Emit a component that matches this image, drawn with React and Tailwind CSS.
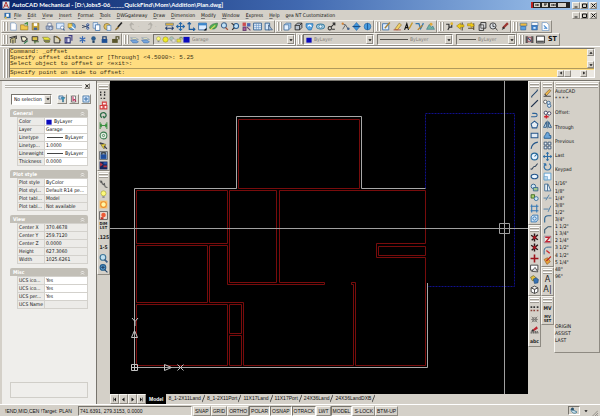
import clsx from 'clsx';

const RAISED = 'border border-t-[#f6f4ef] border-l-[#f6f4ef] border-r-[#8e8a82] border-b-[#8e8a82]';
const SUNKEN = 'border border-t-[#77746d] border-l-[#77746d] border-r-white border-b-white';

const MENUS = ['File', 'Edit', 'View', 'Insert', 'Format', 'Tools', 'DWGgateway', 'Draw', 'Dimension', 'Modify', 'Window', 'Express', 'Help', 'gea NT Customization'];

const page = <path d="M3 1.5h7l3 3v10H3z" fill="#fff" stroke="#5580b5" />;

const ICONS = {
  new: page,
  open: <><path d="M1 5h6l1 2h6v7H1z" fill="#f0c64c" stroke="#8a6d1c" /><path d="M8 4l5-3v5" fill="none" stroke="#3a8a3a" strokeWidth="2" /></>,
  save: <><path d="M2 2h12v12H2z" fill="#c8a63a" stroke="#8a6d1c" /><path d="M5 2h6v5H5z" fill="#fff" /><path d="M5 10h6v4H5z" fill="#3a5f9c" /></>,
  plot: <><path d="M2 7h12v6H2z" fill="#a8b7d0" stroke="#46587c" /><path d="M5 2h6v5H5z" fill="#fff" stroke="#46587c" /><circle cx="10" cy="11" r="3" fill="#c9d6ee" stroke="#46587c" /></>,
  preview: <><path d="M1 2h13v10H1z" fill="#dcecff" stroke="#4477b0" /><circle cx="11" cy="10" r="3" fill="#fff" stroke="#3b5d8e" /><path d="M13 12l2 3" stroke="#3b5d8e" strokeWidth="2" /></>,
  publish: <><circle cx="9" cy="8" r="6" fill="#6ea7d8" stroke="#2c5a8c" /><path d="M2 3h7v7H2z" fill="#f3d25c" stroke="#947619" /><path d="M8 8l6 5" stroke="#fff" strokeWidth="2" /></>,
  cut: <><path d="M2 6l12 4M2 10l12-4" stroke="#33415c" strokeWidth="1.5" /><circle cx="12" cy="5" r="2" fill="none" stroke="#27509c" strokeWidth="1.5" /><circle cx="12" cy="11" r="2" fill="none" stroke="#27509c" strokeWidth="1.5" /></>,
  copy: <><path d="M2 1h8v10H2z" fill="#e4f0ff" stroke="#3a6ea8" /><path d="M6 5h8v10H6z" fill="#fff" stroke="#3a6ea8" strokeWidth="1.5" /></>,
  paste: <><circle cx="7" cy="8" r="5.5" fill="#e4c15c" stroke="#6f5a20" /><path d="M7 6h7v9H7z" fill="#e4f0ff" stroke="#3a6ea8" /></>,
  brush: <><path d="M14 1L7 9" stroke="#222" strokeWidth="3" /><path d="M7 8l2 2-6 5-1-2z" fill="#8a6a2b" /></>,
  undo: <path d="M11 14c-6-1-7-5-5-11M3 6l3-4 4 3" fill="none" stroke="#b1aea7" strokeWidth="2" />,
  redo: <path d="M5 14c6-1 7-5 5-11M13 6l-3-4-4 3" fill="none" stroke="#b1aea7" strokeWidth="2" />,
  dist: <><path d="M1 2h14v4H1z" fill="#e4b437" stroke="#4a6a9a" /><path d="M1 11h14M4 8l-3 3 3 3M12 8l3 3-3 3" fill="none" stroke="#243f70" strokeWidth="1.8" /></>,
  pan: <path d="M8 1v14M1 8h14M5 4l3-3 3 3M5 12l3 3 3-3M4 5L1 8l3 3M12 5l3 3-3 3" fill="none" stroke="#2467a8" strokeWidth="1.8" />,
  ucs: <path d="M4 1v12h10M1 4l3-3 3 3M11 10l3 3-3 3" fill="none" stroke="#1c5ca0" strokeWidth="2" />,
  view: <><path d="M1 2h14v12H1z" fill="#dcecff" stroke="#39699e" strokeWidth="1.5" /><path d="M1 2h14v4H1z" fill="#3b86cc" /><path d="M10 15l5-5v5z" fill="#111" /></>,
  leaf: <><path d="M1 11C2 4 8 3 15 2c0 8-5 12-11 10z" fill="#53ad54" stroke="#236631" /><path d="M2 14l9-8" stroke="#e5e060" strokeWidth="2" /></>,
  zoom: <><circle cx="7" cy="6" r="4.5" fill="#bfe1f7" stroke="#41648c" strokeWidth="1.8" /><path d="M10 10l4 4" stroke="#a5533a" strokeWidth="2.5" /></>,
  zoomPrev: <><circle cx="9" cy="7" r="4.5" fill="#bfe1f7" stroke="#2b5f94" strokeWidth="1.8" /><path d="M6 10l-4 4M1 2l5 4" stroke="#333" strokeWidth="2.2" /></>,
  people: <><path d="M1 1h6v6H1z" fill="#cc4c50" /><path d="M9 2h6v6H9z" fill="#4c67b5" /><path d="M2 9h5v6H2zM9 9l6 6" fill="#ae5aa0" stroke="#6c4472" strokeWidth="2" /></>,
  palette: <><path d="M1 2h14v12H1z" fill="#e3eefa" stroke="#2b5b8e" strokeWidth="1.5" /><path d="M6 2v12M10 2v12M2 6h13M2 10h13" stroke="#5b8bc0" /></>,
  design: <><path d="M2 2h8v12H2z" fill="#d9e9fa" stroke="#2b5b8e" strokeWidth="1.5" /><path d="M8 5l7 9H8z" fill="#9bb8d8" stroke="#26466f" /></>,
  box: <><path d="M2 5l4-3h8v8l-4 4H2z" fill="#9cc3ea" stroke="#34608f" /><path d="M2 5h8v9H2z" fill="#e5f1ff" stroke="#34608f" /></>,
  boxDark: <><path d="M2 6l4-4h8v8l-4 4H2z" fill="#b9c3ce" stroke="#222" strokeWidth="1.5" /><path d="M2 6h8v8M10 6l4-4" fill="none" stroke="#222" strokeWidth="1.5" /></>,
  rotate3d: <><path d="M2 3h12v3l-3 8H6L2 9z" fill="#5ba6e4" stroke="#2877b7" strokeWidth="1.5" /><path d="M5 8c2-4 6-3 6 1" fill="none" stroke="#fff" strokeWidth="2" /></>,
  orbit: <><ellipse cx="8" cy="8" rx="7" ry="4.5" fill="#b9dbef" stroke="#387b9f" strokeWidth="1.8" /><circle cx="8" cy="8" r="3" fill="#eaf6ff" stroke="#387b9f" strokeWidth="1.5" /></>,
  link: <><circle cx="5" cy="11" r="3" fill="none" stroke="#333" strokeWidth="1.8" /><path d="M7 9l7-7M10 2h4v4M9 13h5" stroke="#333" strokeWidth="1.8" fill="none" /></>,
  nodes: <><path d="M2 3l6 2-5 8M8 5l5 8" fill="none" stroke="#4e5560" strokeWidth="1.5" /><circle cx="3" cy="3" r="2" fill="#d88434" /><circle cx="13" cy="12" r="2.4" fill="#48658d" /></>,
  gem: <><path d="M8 1l6 7-6 7-6-7z" fill="#4096dd" stroke="#1c5f9f" /><path d="M1 8h14" stroke="#184f86" strokeWidth="2" /></>,
  globe: <><circle cx="8" cy="8" r="6" fill="#4b9ee0" stroke="#1e5f9e" /><path d="M8 2v12" stroke="#1e5f9e" strokeWidth="2" /></>,
  edit: <><path d="M1 3h11v11H1z" fill="#dfeeff" stroke="#3a6ea8" strokeWidth="1.5" /><path d="M14 1L5 11" stroke="#a5823a" strokeWidth="2.5" /></>,
  erase: <><path d="M3 13L11 2l4 3-7 9z" fill="#f1d067" stroke="#7e6422" /><path d="M1 14h13" stroke="#b34a36" strokeWidth="1.5" /></>,
  textEdit: <><path d="M1 14L5 3l3 11M3 10h5" fill="none" stroke="#111" strokeWidth="2" /><path d="M15 1L9 12" stroke="#c59a2c" strokeWidth="2.5" /></>,
  textStyle: <><path d="M1 3h6l3 9 5-10" fill="none" stroke="#3577ac" strokeWidth="2.2" /><path d="M5 14l8-8" stroke="#bb862e" strokeWidth="2.5" /></>,
  mountain: <><path d="M1 13l5-9 4 6 2-3 3 6z" fill="#74b3a1" stroke="#2d6e87" /><circle cx="9" cy="4" r="2.5" fill="#e0a93a" /></>,
  hook: <><path d="M2 4h5v5h5V3M5 14l3-5" fill="none" stroke="#333" strokeWidth="2" /><circle cx="12" cy="3" r="2.5" fill="#e1b735" /></>,
  arrowL: <><path d="M11 1v14" stroke="#433f31" strokeWidth="1.8" /><path d="M1 7l7-5v3h6v4H8v4z" fill="#f0cd17" stroke="#967711" /></>,
  arrowR: <><path d="M12 2v12M2 11h10" stroke="#594a28" strokeWidth="1.8" /><path d="M1 3h6V1l6 5-6 4V7H1z" fill="#f0cd17" stroke="#9c7612" /></>,
  frame: <><path d="M5 1h9v10h-4v4H2V5h3z" fill="#ddd" stroke="#222" strokeWidth="1.5" /><path d="M5 5h5v6H5z" fill="none" stroke="#222" strokeWidth="1.2" /></>,
  dial: <><circle cx="7" cy="7" r="5.5" fill="#d8dde2" stroke="#333" strokeWidth="1.5" /><path d="M7 3v5h3M11 10l4 5" stroke="#333" strokeWidth="1.5" fill="none" /></>,
  redPen: <><path d="M14 2L5 11" stroke="#9c3530" strokeWidth="4" /><path d="M3 14l3-6 3 3z" fill="#333" /></>,
  dbOpen: <><path d="M2 2h12v5H2z" fill="#f1b93a" stroke="#2e69a8" /><path d="M3 8h9v6H3z" fill="#5a9fe0" stroke="#235a96" /></>,
  dbSave: <><path d="M3 1h11v6H3z" fill="#fff" stroke="#2e69a8" /><path d="M3 6h10v8H3z" fill="#3e83ce" stroke="#235a96" /><path d="M6 9h4v3H6z" fill="#dfefff" /></>,
  dbPage: <><path d="M2 1h8l4 4v10H2z" fill="#fff" stroke="#4f83bd" /><path d="M5 6l6 6M5 11h6" stroke="#4f90d3" strokeWidth="2" /></>,
  layerA: <><path d="M3 14V7l8-3v10" fill="#ddd29a" stroke="#3a3a2c" strokeWidth="1.5" /><path d="M1 5l12-3v5M7 8v7" stroke="#333" strokeWidth="1.8" fill="none" /></>,
  layerB: <><path d="M2 3h7l4 4-4 4H4z" fill="#f3f0d2" stroke="#333" strokeWidth="1.8" /><path d="M7 15l7-5" stroke="#2d7b4b" strokeWidth="2" /></>,
  layerC: <><path d="M2 3h10v7H2z" fill="#ddc34b" stroke="#333" strokeWidth="1.6" /><path d="M7 9v6M5 12h9" stroke="#4d6b3a" strokeWidth="2" /></>,
  layerD: <><path d="M1 4h9l5 3-2 2H4z" fill="#eae63c" stroke="#6b692d" /><path d="M3 10h11l-1 3H6z" fill="#8a8f42" stroke="#4c4f2b" /></>,
  layerE: <><path d="M2 2v12h10V6z" fill="#d9d4bb" stroke="#333" strokeWidth="1.7" /><path d="M6 2l8 8" stroke="#8c6e22" strokeWidth="2" /></>,
  layerF: <><path d="M2 5h9v9H2z" fill="#dfe0f2" stroke="#20286c" strokeWidth="1.8" /><path d="M8 1h6v9M5 5v9" stroke="#403a83" strokeWidth="2" fill="none" /></>,
  snow: <path d="M8 2v12M3 5l10 6M3 11l10-6" stroke="#3467b4" strokeWidth="2.2" />,
  bulbOff: <><circle cx="8" cy="6" r="4" fill="#2b5d8f" /><path d="M6 10h4v4H6z" fill="#24425f" /></>,
  lock: <><path d="M3 7h10v7H3z" fill="#1e4f94" /><path d="M5 7V3h6v4" fill="none" stroke="#1e3d6b" strokeWidth="2" /></>,
  unlock: <><path d="M2 7h10v7H2z" fill="#5a562c" /><path d="M9 7V3h5v5" fill="none" stroke="#4e4b26" strokeWidth="2" /></>,
  layers: <><path d="M1 5h9l5 3H6z" fill="#f2efc0" stroke="#7a8fae" /><path d="M1 9h9l5 3-3 2H5z" fill="#79a7dd" stroke="#436fa8" /></>,
  bulb: <><circle cx="8" cy="6" r="4.5" fill="#fcf97a" stroke="#9a9631" /><path d="M6 11h4v3H6z" fill="#8a8a8a" /></>,
  sun: <circle cx="8" cy="8" r="6" fill="#f1ed26" stroke="#a29b2b" strokeWidth="1.5" />,
  freeze: <><circle cx="6" cy="6" r="4.5" fill="#a9c4c0" stroke="#82906c" /><path d="M7 7h7v7H7z" fill="#e5e5df" stroke="#8c8c8c" /></>,
  unlockDim: <><path d="M2 7h9v7H2z" fill="#e6df3c" stroke="#8a8637" /><path d="M9 7V3h5v5" fill="none" stroke="#6d8a5a" strokeWidth="2" /></>,
  color: <rect x="1" y="2" width="14" height="13" fill="#0b0bbd" />,
  layout: <><path d="M1 2h4v12H1zM11 2h4v12h-4z" fill="#555" /><path d="M5 4h6v8H5z" fill="#ddd" stroke="#8b3542" strokeWidth="1.5" /><path d="M5 5l6 6" stroke="#357" strokeWidth="2" /></>,
  viewport: <><path d="M1 2h14v12H1z" fill="#fff" stroke="#222" strokeWidth="1.5" /><path d="M2 10h12v3H2z" fill="#555" /></>,
  filter: <><path d="M2 2h8v6H2z" fill="#dce9f7" stroke="#35699c" strokeWidth="1.6" /><path d="M6 5h8l-3 4v5H9V9z" fill="#3a9cc8" stroke="#24607f" /></>,
  select: <><path d="M3 2h8v12H3z" fill="#fff" stroke="#555" strokeWidth="1.4" /><path d="M6 3v8l3-2 3 4" fill="none" stroke="#bc2f5b" strokeWidth="2.2" /></>,
  pickadd: <><path d="M2 2h12v12H2z" fill="#dceafb" stroke="#3b73ac" strokeWidth="1.6" /><path d="M8 4v8M4 8h8" stroke="#3b73ac" strokeWidth="2" /></>,
  dots: <path d="M3 1v9M10 1v9M3 13h2M8 13h3" stroke="#333" strokeWidth="2.4" strokeDasharray="3 1.5" />,
  redBoxes: <path d="M2 8h5v6H2zM9 8h5v6H9zM6 2h7v5H6z" fill="#ffe9e9" stroke="#d23b3b" strokeWidth="1.8" />,
  loop: <path d="M5 12c-5-5-1-10 4-9 5 2 5 7 0 9l-2-3" fill="none" stroke="#2f6e48" strokeWidth="2.4" />,
  dimH: <path d="M2 2v12M14 2v12M2 8h12M5 5L2 8l3 3M11 5l3 3-3 3" fill="none" stroke="#3b8f3f" strokeWidth="1.8" />,
  target: <><circle cx="8" cy="8" r="6" fill="#e8f0e6" stroke="#3b7c50" strokeWidth="1.8" /><circle cx="8" cy="8" r="2" fill="none" stroke="#3b7c50" strokeWidth="1.5" /></>,
  bolt: <><path d="M2 3l10 3-3 8-4-5z" fill="#e3cb3a" stroke="#5e5725" /><path d="M1 4l7 1M9 9l5 5" stroke="#3c3f52" strokeWidth="2.4" /></>,
  blueLock: <><path d="M1 1h14v14H1z" fill="#9db6d2" stroke="#333" /><path d="M3 6h10v8H3z" fill="#1d4c9c" /><path d="M5 6V3h6v3" fill="none" stroke="#222" strokeWidth="2" /></>,
  sheet: <><path d="M1 1h14v14H1z" fill="#15235d" /><path d="M2 2l5 4-5 4zM8 8h6v3H8z" fill="#b33340" /><path d="M8 2h6v4H8z" fill="#2650ab" /></>,
  chain: <path d="M1 3l4 2 1 4 4 1 1 4 4 1M5 3l-2 4M10 7l-2 4" fill="none" stroke="#555" strokeWidth="1.8" />,
  sunOn: <><path d="M1 1h14v14H1z" fill="#f8c36a" /><circle cx="8" cy="8" r="5" fill="#fff6a5" stroke="#ec8b2d" strokeWidth="2" /></>,
  sunOff: <><path d="M1 1h14v14H1z" fill="#eddfd4" stroke="#555" strokeWidth="1.5" /><circle cx="8" cy="7" r="4" fill="#ed5a36" /><path d="M3 11h5v4H3z" fill="#c23327" /></>,
  magnify: <><circle cx="7" cy="6" r="5" fill="#c0e0f0" stroke="#3a7395" strokeWidth="2" /><path d="M10 10l5 5" stroke="#3a5c85" strokeWidth="3" /></>,
  magnifyPlus: <><circle cx="7" cy="6" r="5" fill="#5d9ed0" stroke="#245d8c" strokeWidth="2" /><path d="M10 10l5 5M4 6h6M7 3v6" stroke="#24466b" strokeWidth="2" /></>,
  dish: <><path d="M2 4c0 8 8 11 12 6z" fill="#cfe6f2" stroke="#36708c" strokeWidth="1.6" /><circle cx="5" cy="4" r="3" fill="#27506b" /></>,
  line: <path d="M3 13L13 3M2 14h2M12 2h2" stroke="#24466b" strokeWidth="1.8" />,
  ray: <path d="M2 14L14 2" stroke="#1c2f4b" strokeWidth="2.2" />,
  pline: <path d="M2 12h7c5 0 5-6 0-6H4" fill="none" stroke="#2a6299" strokeWidth="1.8" />,
  polygon: <path d="M8 2l6 5-2 7H4L2 7z" fill="#e7eef5" stroke="#24568a" strokeWidth="1.8" />,
  rect: <path d="M2 4h12v8H2z" fill="#dfe9f4" stroke="#24568a" strokeWidth="1.8" />,
  arc: <path d="M2 14C3 7 7 3 14 2" fill="none" stroke="#24568a" strokeWidth="1.9" />,
  circle: <><circle cx="8" cy="8" r="6" fill="#e8f3fd" stroke="#24679a" strokeWidth="2" /><path d="M8 8l4-4" stroke="#24679a" strokeWidth="1.8" /></>,
  spline: <path d="M1 12c4 3 4-5 7-4s3-5 6-5" fill="none" stroke="#34465b" strokeWidth="1.9" />,
  ellipse: <ellipse cx="8" cy="8" rx="6" ry="4" fill="#e8f3fd" stroke="#24568a" strokeWidth="2" />,
  insert: <><circle cx="6" cy="6" r="4" fill="#cfe5f5" stroke="#34658e" strokeWidth="1.7" /><path d="M6 8h8v6H6z" fill="#9fc98e" stroke="#34658e" strokeWidth="1.5" /></>,
  block: <><path d="M2 3h6v6H2z" fill="#a9cf6c" stroke="#38641e" strokeWidth="1.5" /><circle cx="11" cy="10" r="3.5" fill="#cfe5f5" stroke="#2e6998" strokeWidth="1.5" /></>,
  hatch: <path d="M3 1v14M12 1v14M1 4h14M1 12h14" fill="none" stroke="#3276b4" strokeWidth="1.9" />,
  region: <><path d="M2 5l3-3h9v8l-3 4H2z" fill="#d5e7f7" stroke="#3276b4" strokeWidth="1.6" /><circle cx="8" cy="8" r="3" fill="none" stroke="#3276b4" strokeWidth="1.6" /></>,
  star: <><path d="M8 1v14M2 4l12 8M14 3L3 13" stroke="#2a1517" strokeWidth="2.6" /><circle cx="8" cy="8" r="3" fill="#a3161f" /></>,
  redPlus: <path d="M8 1v14M1 8h14" stroke="#9d1219" strokeWidth="2.8" />,
  crossPage: <><path d="M1 2h13v9H1z" fill="#fff" stroke="#444" strokeWidth="1.7" /><path d="M3 13l6-7 5 8z" fill="#ddd" stroke="#444" strokeWidth="1.5" /></>,
  cubes: <><path d="M1 4l5-3 4 3v6H4z" fill="#e4bf3d" stroke="#4f5a31" /><path d="M6 7l5-2 4 3-1 6-6 1z" fill="#3772b4" stroke="#1c4571" /></>,
  cube: <path d="M2 5l6-3 6 3v7l-6 3-6-3zM2 5l6 3 6-3M8 8v7" fill="#fff" stroke="#333" strokeWidth="1.5" />,
  redDots: <><path d="M1 4h3v3H1zM6 4h3v3H6zM12 4h3v3h-3z" fill="#333" /><path d="M1 10h3v3H1zM6 10h3v3H6zM12 10h3v3h-3z" fill="#8a4038" /></>,
  spider: <path d="M3 3l10 10M13 3L3 13M2 8h12M5 5h6v6H5z" fill="none" stroke="#7c7a76" strokeWidth="1.5" />,
  pencilRed: <><path d="M1 12l4-5 3 3z" fill="#333" /><path d="M5 8l7-6 2 4-6 4z" fill="#bd2530" /><path d="M1 14h14M4 12h10" stroke="#333" strokeWidth="1.6" strokeDasharray="3 1" /></>,
  eraser: <><path d="M3 9l8-8 3 2-8 9z" fill="#f0b84d" stroke="#654f2e" /><path d="M1 13h13M3 9l3 3" stroke="#454545" strokeWidth="1.8" /></>,
  copyObj: <><circle cx="4" cy="5" r="3" fill="#fff" stroke="#555" strokeWidth="1.5" /><circle cx="10" cy="7" r="3" fill="#dbeaf8" stroke="#336291" strokeWidth="1.5" /><circle cx="11" cy="12" r="3" fill="#dbeaf8" stroke="#336291" strokeWidth="1.5" /></>,
  copyRed: <><circle cx="5" cy="5" r="3" fill="#fff" stroke="#335" strokeWidth="1.5" /><circle cx="11" cy="6" r="3" fill="#fff" stroke="#335" strokeWidth="1.5" /><path d="M2 12h8M6 9v6" stroke="#cc2530" strokeWidth="2.5" /></>,
  mirror: <><path d="M6 3v10H1zM10 3v10h5z" fill="#c2dbef" stroke="#285783" strokeWidth="1.6" /><path d="M8 1v14" stroke="#285783" /></>,
  offset: <path d="M2 13c-1-5 3-5 4-10 4-2 6 2 5 5h3v5z" fill="#6ca5d8" stroke="#275d91" strokeWidth="1.6" />,
  array: <path d="M2 2h5v5H2zM9 2h5v5H9zM2 9h5v5H2zM9 9h5v5H9z" fill="#e4ebf2" stroke="#34506f" strokeWidth="1.5" />,
  move: <path d="M8 1v14M1 8h14M6 3l2-2 2 2M6 13l2 2 2-2M3 6L1 8l2 2M13 6l2 2-2 2" fill="none" stroke="#2d6da5" strokeWidth="1.9" />,
  rotate: <path d="M5 3a6 6 0 1 0 6 0M5 3v4M5 3H1" fill="none" stroke="#2d6da5" strokeWidth="2" />,
  scale: <><path d="M2 2h12v12H2z" fill="#f2f8ff" stroke="#5a9ccc" strokeWidth="1.6" /><path d="M2 8h6v6H2z" fill="#b9d5eb" stroke="#5a9ccc" /></>,
  stretch: <path d="M3 2h6l5 12H3zM8 2v12" fill="#e9f1f8" stroke="#446c91" strokeWidth="1.6" />,
  trim: <path d="M1 9h6M10 9h5M5 13l6-10" stroke="#4b7ca5" strokeWidth="1.6" />,
  extend: <path d="M1 9h9M9 14l5-11" stroke="#4b7ca5" strokeWidth="1.6" />,
  fillet: <path d="M3 15V9c0-4 3-6 6-6h6" fill="none" stroke="#2b6290" strokeWidth="2" />,
  chamfer: <path d="M3 15V8l6-5h6" fill="none" stroke="#35556f" strokeWidth="1.8" />,
  zed: <><path d="M2 2h12v12H2z" fill="#efe8e0" stroke="#6a7c92" /><path d="M4 4h8L5 12h8" fill="none" stroke="#be2434" strokeWidth="2.4" /></>,
  filletRed: <><path d="M2 15V8c0-4 3-6 7-6h6" fill="none" stroke="#2b6290" strokeWidth="1.6" /><path d="M6 8l6 5" stroke="#ca2b32" strokeWidth="2.5" /></>,
  explode: <><path d="M2 6l6-3 5 7-6 5z" fill="#e6a43a" stroke="#8c4f1c" /><path d="M14 1L6 9" stroke="#bf2f22" strokeWidth="2.2" /></>,
};

const STANDARD = [
  ['new', 'open', 'save', '|', 'plot', 'preview', 'publish', '|', 'cut', 'copy', 'paste', 'brush', '|', 'undo', '.', 'redo', '.', '|', 'dist', 'pan', 'ucs', 'view', 'leaf', 'zoom', 'zoomPrev', 'people', 'palette', 'design'],
  ['box', 'boxDark', 'rotate3d', 'orbit', 'link', '|', 'nodes', 'gem', 'globe'],
  ['edit', 'erase', 'textEdit', 'textStyle', 'mountain'],
  ['hook', 'arrowL', 'arrowR', 'frame', 'dial', 'redPen'],
  ['dbOpen', 'dbSave', 'dbPage'],
];

const SECTIONS = [
  {
    title: 'General',
    rows: [
      ['Color', 'ByLayer', 'color'],
      ['Layer', 'Garage'],
      ['Linetype', 'ByLayer', 'line'],
      ['Linetyp...', '1.0000'],
      ['Lineweight', 'ByLayer', 'line'],
      ['Thickness', '0.0000'],
    ],
    editable: 6,
  },
  {
    title: 'Plot style',
    rows: [['Plot style', 'ByColor'], ['Plot styl...', 'Default R14 pe...'], ['Plot tabl...', 'Model'], ['Plot tabl...', 'Not available']],
    editable: 2,
  },
  {
    title: 'View',
    rows: [['Center X', '370.4678'], ['Center Y', '259.7120'], ['Center Z', '0.0000'], ['Height', '627.3060'], ['Width', '1025.6261']],
    editable: 0,
  },
  {
    title: 'Misc',
    rows: [['UCS ico...', 'Yes'], ['UCS ico...', 'Yes'], ['UCS per...', 'Yes'], ['UCS Name', '']],
    editable: 3,
  },
];

const SCREEN_MENU = [
  'AutoCAD', '* * * *', '', 'Offset:', '', 'Through', '', 'Previous', '', 'Last', '', 'Keypad', '',
  '1/16"', '1/8"', '1/4"', '3/8"', '1/2"', '3/4"', '1 1/2"', '1 3/4"', '2 1/4"', '3 1/2"', '4 1/2"', '5 1/4"', '48"', '96"',
  '', '', '', '', '', '', 'ORIGIN', 'ASSIST', 'LAST',
];

const TABS = ['8_1-2X11Land', '8_1-2X11Port', '11X17Land', '11X17Port', '24X36Land', '24X36LandDXB'];

const MODES = [
  ['SNAP', false], ['GRID', false], ['ORTHO', false], ['POLAR', true], ['OSNAP', true],
  ['OTRACK', true], ['LWT', false], ['MODEL', true], ['S-LOCK', false], ['BTM-UP', false],
];

const Icon = ({ name, className = 'size-[9px]' }) => (
  <svg viewBox="0 0 16 16" className={clsx('shrink-0', className)} aria-hidden="true">{ICONS[name]}</svg>
);

const Arrow = ({ dir = 'down', className = 'size-[5px]' }) => {
  const paths = { down: 'M1 3h8L5 8z', up: 'M1 7h8L5 2z', left: 'M7 1v8L2 5z', right: 'M3 1v8l5-4z', first: 'M8 1v8L4 5zM2 1h1v8H2z', last: 'M2 1v8l4-4zM7 1h1v8H7z' };
  return <svg viewBox="0 0 10 10" className={className} aria-hidden="true"><path d={paths[dir]} fill="#111" /></svg>;
};

const Grip = ({ vertical = false }) => (
  <span className={clsx('flex shrink-0 gap-px', vertical ? 'mx-px h-[6px] flex-col justify-center' : 'my-px w-[6px] justify-center')}>
    <span className={clsx('border-[#a09c94] bg-white', vertical ? 'h-[2px] border-b' : 'w-[2px] border-r')} />
    <span className={clsx('border-[#a09c94] bg-white', vertical ? 'h-[2px] border-b' : 'w-[2px] border-r')} />
  </span>
);

const ToolButton = ({ name }) => (
  <button type="button" aria-label={name} className="flex w-[11px] shrink-0 items-center justify-center">
    <Icon name={name} />
  </button>
);

const Toolbar = ({ items, children }) => (
  <div className={clsx('flex shrink-0 items-stretch', RAISED)}>
    <Grip />
    {items.map((item, i) => {
      if (item === '|') return <span key={i} className="w-[3px] shrink-0" />;
      if (item === '.') return <span key={i} className="flex w-[6px] shrink-0 items-center text-[#a09c94]">·</span>;
      return <ToolButton key={i} name={item} />;
    })}
    {children}
  </div>
);

// Text marks used where a tool's face is lettering rather than a picture
const LABELS = { dimList: 'DIM\nLST', d125: '.125', d15: '1-5', A: 'A', AI: 'A|', MV: 'MV', MVSET: 'MV\nSET', abc: 'abc' };

const SideToolbar = ({ items, className }) => (
  <div className={clsx('flex shrink-0 flex-col', RAISED, className)}>
    <Grip vertical />
    {items.map((name, i) => (
      <button key={i} type="button" aria-label={name} className="flex min-h-0 flex-1 items-center justify-center">
        {LABELS[name] ? (
          <span
            className={clsx(
              'whitespace-pre text-center text-[#222]',
              name === 'A' || name === 'AI' ? 'text-[9px] leading-[9px]' : name.length > 4 ? 'text-[4px] leading-[4px] font-bold' : 'text-[5px] leading-[6px] font-bold'
            )}
          >
            {LABELS[name]}
          </span>
        ) : (
          <Icon name={name} />
        )}
      </button>
    ))}
  </div>
);

const Combo = ({ label, className, children, value, muted = true }) => (
  <div className={clsx('flex h-[11px] items-center self-center', SUNKEN, className)}>
    {children}
    <select
      aria-label={label}
      className={clsx('h-[9px] min-w-0 flex-1 appearance-none pl-[2px] leading-[9px] outline-none', muted ? 'text-[#85827b]' : 'text-black')}
      defaultValue={value}
    >
      <option>{value}</option>
    </select>
    <span className={clsx('flex w-[7px] shrink-0 items-center justify-center self-stretch bg-[#d4d0c8]', RAISED)}>
      <Arrow className="size-[4px]" />
    </span>
  </div>
);

const WindowButton = ({ label, children }) => (
  <button type="button" aria-label={label} className={clsx('flex h-[7px] w-[8px] items-center justify-center bg-[#d4d0c8]', RAISED)}>
    <svg viewBox="0 0 10 10" className="size-[5px]" fill="none" stroke="#111" strokeWidth="2">{children}</svg>
  </button>
);

const WindowControls = () => (
  <div className="flex">
    <WindowButton label="Minimize"><path d="M1 8h6" /></WindowButton>
    <WindowButton label="Restore"><path d="M1 2h8v7H1z" /></WindowButton>
    <span className="w-px" />
    <WindowButton label="Close"><path d="M1 1l8 8M9 1L1 9" /></WindowButton>
  </div>
);

const TitleBar = () => (
  <header className="flex h-[10px] items-center justify-between bg-linear-to-r from-[#0a246a] via-[#4169b0] to-[#a6caf0] pr-[3px] pl-[2px]">
    <h1 className="flex items-center gap-[2px] font-['Lato','Liberation_Sans',sans-serif] text-[6px] leading-[8px] font-bold whitespace-pre text-white">
      <svg viewBox="0 0 16 16" className="size-[8px]" aria-hidden="true"><path d="M1 1h14v14H1z" fill="#dfe6ee" /><path d="M3 14L8 2l5 12M5 10h6" fill="none" stroke="#b0332e" strokeWidth="2" /></svg>
      {'AutoCAD Mechanical - [D:\\Jobs5-06_____QuickFind\\Mom\\Addition\\Plan.dwg]'}
    </h1>
    <div className="flex items-center gap-[2px]">
      <svg viewBox="0 0 39 6" className="h-[6px] w-[39px]" aria-hidden="true">
        <path d="M0 0h39v6H0z" fill="#222" />
        <path d="M0 0h2v6H0z" fill="#b22" />
        <path d="M3 1h6v4H3zM11 1h6v4h-6zM19 1h6v4h-6zM27 1h8v4h-8z" fill="#d4d0c8" />
        <path d="M4 3h3M7 2v2M13 2h3M14 2v2M20 3h3M22 3h3" stroke="#222" />
      </svg>
      <WindowControls />
    </div>
  </header>
);

const MenuBar = () => (
  <nav className="flex h-[10px] items-center pr-[3px] pl-[4px]">
    <svg viewBox="0 0 16 16" className="mr-[3px] size-[7px]" aria-hidden="true"><path d="M1 2h14v12H1z" fill="#2d6cab" /><path d="M5 4h6v7H5z" fill="#fff" /><path d="M2 11h4v4H2z" fill="#e0bc37" /></svg>
    <div className="flex flex-1 gap-[6px]">
      {MENUS.map((menu) => (
        <button key={menu} type="button" className="whitespace-nowrap">
          <span className="underline decoration-[#777]">{menu[0]}</span>{menu.slice(1)}
        </button>
      ))}
    </div>
    <WindowControls />
  </nav>
);

const LineSample = ({ className }) => <span className={clsx('ml-[2px] h-px shrink-0 bg-[#55534e]', className)} />;

const LayerBar = () => (
  <div className="flex h-[13px] pl-px">
    <Toolbar items={['layerA', 'layerB', 'layerC', 'layerD', 'layerE', 'layerF', '|', 'snow', 'bulbOff', 'lock', 'unlock']} />
    <Toolbar items={['layers', 'layers']}>
      <Combo label="Layer" value="Garage" className="ml-[2px] w-[142px]">
        <span className="flex pl-px">
          {['bulb', 'sun', 'freeze', 'unlockDim', 'color'].map((name) => <Icon key={name} name={name} className="size-[7px]" />)}
        </span>
      </Combo>
    </Toolbar>
    <Toolbar items={[]}>
      <Combo label="Color" value="ByLayer" className="w-[71px]"><Icon name="color" className="ml-[2px] size-[6px]" /></Combo>
      <span className="w-[3px]" />
      <Combo label="Linetype" value="ByLayer" className="w-[76px]"><LineSample className="w-[28px]" /></Combo>
      <span className="w-[3px]" />
      <Combo label="Lineweight" value="ByLayer" className="w-[60px]"><LineSample className="w-[17px]" /></Combo>
    </Toolbar>
    <Toolbar items={['layout', 'viewport']}>
      <button type="button" className="px-[2px] text-[7px] leading-[7px] font-bold">ST</button>
    </Toolbar>
  </div>
);

const ScrollButton = ({ dir }) => (
  <button type="button" aria-label={`Scroll ${dir}`} className={clsx('flex size-[7px] shrink-0 items-center justify-center bg-[#d4d0c8]', RAISED)}>
    <Arrow dir={dir} className="size-[4px]" />
  </button>
);

const CommandLine = () => (
  <section className="flex h-[34px] border-t border-white py-px pr-[5px] pl-[2px]">
    <Grip />
    <div className={clsx('ml-px flex flex-1 flex-col self-start bg-[#ffdd80] font-["Liberation_Mono",monospace] text-[6px] leading-[6px] text-[#3d3317]', SUNKEN)}>
      <div className="flex h-[20px] border-b border-[#b09a5c]">
        <div className="flex-1 whitespace-pre">
          <p>Command: _offset</p>
          <p>{'Specify offset distance or [Through] <4.5000>: 5.25'}</p>
          <p>{'Select object to offset or <exit>:'}</p>
        </div>
        <div className="flex flex-col justify-between bg-[#ebe8e2]">
          <ScrollButton dir="up" />
          <ScrollButton dir="down" />
        </div>
      </div>
      <div className="flex h-[8px] items-center">
        <input aria-label="Command" className="h-[8px] min-w-0 flex-1 leading-[8px] outline-none" defaultValue="Specify point on side to offset:" />
        <div className="flex w-[37px] bg-[#ebe8e2] pr-[7px]">
          <ScrollButton dir="left" />
          <span className={clsx('w-[7px] bg-[#d4d0c8]', RAISED)} />
          <span className="flex-1" />
          <ScrollButton dir="right" />
        </div>
      </div>
    </div>
  </section>
);

const PropertySection = ({ title, rows, editable }) => (
  <section>
    <h2 className="flex h-[8px] items-center justify-between rounded-t-[2px] bg-[#c2bfb7] px-[3px] leading-[7px] font-bold text-white">
      {title}
      <svg viewBox="0 0 10 10" className="size-[5px]" fill="none" stroke="#fff" strokeWidth="1.5" aria-hidden="true"><path d="M2 5l3-3 3 3M2 9l3-3 3 3" /></svg>
    </h2>
    <table className="ml-[7px] w-[71px] table-fixed border-collapse">
      <tbody>
        {rows.map(([label, value, mark], i) => (
          <tr key={i} className="h-[8px]">
            <th scope="row" className="w-[27px] border border-[#d3d1cc] bg-[#ecebe8] p-0 pl-px text-left leading-[7px] font-normal whitespace-nowrap">{label}</th>
            <td className={clsx('border border-[#d3d1cc] p-0 pl-px leading-[7px] whitespace-nowrap', i < editable ? 'bg-white' : 'bg-[#ecebe8]')}>
              <span className="flex h-[7px] items-center">
                {mark === 'color' && <Icon name="color" className="mr-[2px] size-[6px]" />}
                {mark === 'line' && <span className="mr-[2px] ml-px h-px w-[16px] bg-[#444]" />}
                {value}
              </span>
            </td>
          </tr>
        ))}
      </tbody>
    </table>
  </section>
);

const PropertiesPalette = () => (
  <aside className="flex w-[97px] shrink-0 flex-col border-r border-[#77746d] bg-[#efeeeb] pl-[2px] shadow-[inset_2px_0_#d4d0c8]">
    <div className="flex h-[10px] items-center gap-[2px] pr-[6px] pl-[3px]">
      <span className="h-[3px] flex-1 border-y border-[#b5b2aa] bg-white" />
      <button type="button" aria-label="Close palette" className={clsx('size-[6px] bg-[#d4d0c8]', RAISED)}>
        <svg viewBox="0 0 10 10" className="size-[4px]" stroke="#111" strokeWidth="2" aria-hidden="true"><path d="M1 1l8 8M9 1L1 9" /></svg>
      </button>
    </div>
    <div className="flex h-[16px] items-center gap-[2px] pl-[9px]">
      <Combo label="Selection" value="No selection" muted={false} className="w-[41px] bg-white" />
      <span className="w-px" />
      {['filter', 'select', 'pickadd'].map((name) => (
        <button key={name} type="button" aria-label={name} className={clsx('flex size-[10px] items-center justify-center bg-[#e4e1db]', RAISED)}>
          <Icon name={name} className="size-[8px]" />
        </button>
      ))}
    </div>
    <div className="flex flex-1 flex-col gap-[4px] pt-[2px] pr-[8px] pl-[8px]">
      {SECTIONS.map((section) => <PropertySection key={section.title} {...section} />)}
      <div className="mt-auto mb-[6px] h-[16px] border border-[#d0cec8]" />
    </div>
  </aside>
);

const FloorPlan = () => (
  <svg viewBox="110 81 418 313" className="min-h-0 w-full flex-1" fill="none" role="img" aria-label="Floor plan">
    <g stroke="#780c0c">
      <path d="M238.5 188.5V119.5H359.5V188.5z" />
      <path d="M136.5 190.5H227.5V243.5H136.5z" />
      <path d="M136.5 245.5H207.5V302.5H136.5z" />
      <path d="M227.5 245.5H209.5V302.5H243.5V365.5M227.5 245.5V284.5H324.5V282.5H279.5V190.5H425.5V243.5H376.5V257.5H425.5V365.5H355.5V282.5H351.5V284.5H353.5V365.5H243.5" />
      <path d="M229.5 190.5H276.5V282.5H229.5z" />
      <path d="M136.5 304.5H227.5V365.5H136.5z" />
      <path d="M229.5 304.5H241.5V333.5H229.5zM229.5 335.5H241.5V365.5H229.5z" />
      <path d="M378.5 246.5H425.5V255.5H378.5z" />
    </g>
    <path d="M425.5 188.5V113.5H514.5V286.5H427.5" stroke="#10108c" strokeDasharray="2 1" />
    <path d="M427.5 283V367.5H134.5V188.5H236.5V116.5H361.5V188.5H425.5" stroke="#a8a8a8" />
    <path d="M110 228.5H528M504.5 81V394M499.5 223.5h10v10h-10z" stroke="#a0a0a0" />
    <g stroke="#c4c4c4">
      <path d="M131.5 364.5h6v6h-6zM131.5 367.5h6M134.5 364.5v6" />
      <path d="M131.5 337.5h6l-3-7zM164.5 364.5v6l7-3z" />
      <path d="M132 318l3 3.500 3-3.500M135 321.500V326M177.500 364.500l6 6M183.500 364.500l-6 6" />
    </g>
  </svg>
);

const LayoutTabs = () => (
  <div className="flex h-[10px] shrink-0 items-stretch bg-[#d4d0c8] font-['Liberation_Sans',sans-serif] leading-[9px]">
    {['first', 'left', 'right', 'last'].map((dir) => (
      <button key={dir} type="button" aria-label={`${dir} tab`} className={clsx('flex w-[9px] items-center justify-center', RAISED)}>
        <Arrow dir={dir} />
      </button>
    ))}
    <button type="button" className="bg-black px-[3px] font-bold text-white">Model</button>
    {TABS.map((tab) => (
      <button key={tab} type="button" className="flex whitespace-nowrap">
        <span className="pr-px pl-[2px]">{tab}</span>
        <svg viewBox="0 0 4 10" className="h-[9px] w-[3px]" aria-hidden="true"><path d="M0 10L4 0" stroke="#222" /></svg>
      </button>
    ))}
  </div>
);

const StatusBar = () => (
  <footer className="flex h-[12px] items-center border-t border-white pr-[2px] pl-[5px] font-['Liberation_Sans',sans-serif] leading-[8px]">
    <span className="w-[73px] whitespace-nowrap">!END,MID,CEN !Target: PLAN</span>
    <span className={clsx('mr-px h-[10px] w-[114px] pl-px', SUNKEN)}>741.6391, 279.3153, 0.0000</span>
    {MODES.map(([mode, on]) => (
      <button key={mode} type="button" className={clsx('h-[10px] px-px whitespace-nowrap', on ? SUNKEN : RAISED)}>{mode}</button>
    ))}
    <span className="flex-1" />
    <button type="button" aria-label="Communication center" className={clsx('flex h-[9px] w-[12px] items-center justify-center', SUNKEN)}><Icon name="dish" className="size-[8px]" /></button>
    <span className="w-[4px]" />
    <Arrow className="size-[4px]" />
    <span className="w-[4px]" />
    <svg viewBox="0 0 10 10" className="size-[6px] self-end" stroke="#8c8982" strokeWidth="1.5" aria-hidden="true"><path d="M1 10l9-9M5 10l5-5M8 10l2-2" /></svg>
  </footer>
);

export default function App() {
  return (
    <div className="flex h-screen flex-col overflow-hidden bg-[#d4d0c8] font-['DejaVu_Sans_Condensed','DejaVu_Sans',sans-serif] text-[5px] leading-[7px] text-[#111]">
      <TitleBar />
      <MenuBar />
      <div className="flex h-[13px] pl-px">
        {STANDARD.map((items, i) => <Toolbar key={i} items={items} />)}
      </div>
      <LayerBar />
      <CommandLine />
      <main className="flex min-h-0 flex-1 border-t border-[#77746d]">
        <PropertiesPalette />
        <div className="w-[13px] shrink-0 pt-[2px]">
          <SideToolbar className="h-[88px]" items={['dots', 'redBoxes', 'loop', 'dimH', 'target', 'bolt', 'blueLock', 'sheet']} />
          <SideToolbar className="h-[104px]" items={['chain', 'bulb', 'sunOn', 'sunOff', 'dimList', 'd125', 'd15', 'magnify', 'magnifyPlus']} />
        </div>
        <div className="flex min-w-0 flex-1 flex-col bg-black">
          <FloorPlan />
          <LayoutTabs />
        </div>
        <div className="w-[13px] shrink-0">
          <SideToolbar className="h-[144px]" items={['line', 'ray', 'pline', 'polygon', 'rect', 'arc', 'circle', 'spline', 'ellipse', 'insert', 'block', 'hatch', 'region']} />
          <SideToolbar className="h-[71px]" items={['star', 'star', 'redPlus', 'crossPage', 'cubes', 'cube']} />
          <SideToolbar className="h-[51px]" items={['redDots', 'spider', 'pencilRed', 'abc']} />
        </div>
        <div className="w-[13px] shrink-0">
          <SideToolbar className="h-[186px]" items={['eraser', 'copyObj', 'copyRed', 'mirror', 'offset', 'array', 'move', 'rotate', 'scale', 'stretch', 'trim', 'extend', 'fillet', 'chamfer', 'zed', 'filletRed', 'explode']} />
          <SideToolbar className="h-[29px]" items={['A', 'AI']} />
          <SideToolbar className="h-[29px]" items={['MV', 'MVSET']} />
        </div>
        <div className={clsx('flex w-[46px] shrink-0 flex-col self-start pb-[8px]', RAISED)}>
          <Grip vertical />
          <ul className="flex h-[256px] flex-col">
            {SCREEN_MENU.map((item, i) => (
              <li key={i} className="min-h-0 flex-1 whitespace-nowrap">{item && <button type="button" className="block">{item}</button>}</li>
            ))}
          </ul>
        </div>
      </main>
      <StatusBar />
    </div>
  );
}
